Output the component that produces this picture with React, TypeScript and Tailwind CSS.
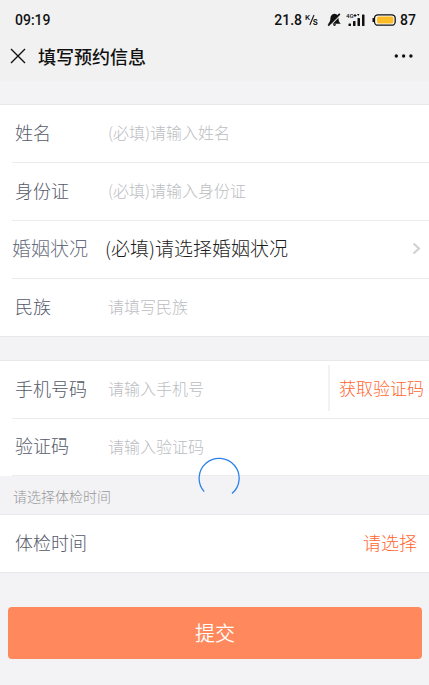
import type { ReactNode } from "react";

const INPUT =
  "min-w-0 flex-1 bg-transparent text-[16px] font-light text-[#333333] outline-none placeholder:text-[#bcbdc2] placeholder:opacity-100";

function StatusBar() {
  return (
    <div className="flex h-10 items-center justify-between pl-[15px] pr-[13px] font-['Roboto','Noto_Sans_CJK_SC',sans-serif] text-[14px] font-medium text-[#111111]">
      <span>09:19</span>
      <div className="flex items-center">
        <span>21.8</span>
        <svg className="ml-[3px]" width="14" height="18" viewBox="0 0 14 18" aria-label="K/s" fill="#111111">
          <text x="0" y="9" fontSize="8">K</text>
          <path d="M9 4L4.8 14" stroke="#111111" strokeWidth="1.1" />
          <text x="7.8" y="14" fontSize="10">s</text>
        </svg>
        <svg className="ml-2" width="15" height="14" viewBox="0 0 15 14" aria-label="静音">
          <path d="M7.5 0.8C4.4 1.3 3.5 3.2 3.4 5.5C3.3 8 2.7 9.2 1 10.8H13.8C12.3 9.2 11.6 8 11.5 5.5C11.4 3.2 10.5 1.3 7.5 0.8Z" fill="#111111" />
          <path d="M5.8 11.2H9.2Q8.8 13 7.5 13Q6.2 13 5.8 11.2Z" fill="#111111" />
          <path d="M13.8 1.6L2.6 13" stroke="#f1f1f1" strokeWidth="1.2" />
          <path d="M12.8 0.8L1.2 12.6" stroke="#111111" strokeWidth="1.7" />
        </svg>
        <svg className="ml-1" width="20" height="16" viewBox="0 0 20 16" aria-label="4G+" fill="#111111">
          <text x="0" y="6" fontSize="6">4G</text>
          <path d="M7.5 3.5H10.5M9 2V5" stroke="#111111" strokeWidth="1" />
          <path d="M11 2H13.5L12.2 4Z" />
          <rect x="2.5" y="11.5" width="2.5" height="2.5" rx="0.6" />
          <rect x="7" y="9" width="2.5" height="5" rx="0.6" />
          <rect x="11.5" y="6" width="2.5" height="8" rx="0.6" />
          <rect x="16" y="2.5" width="2.5" height="11.5" rx="0.6" />
        </svg>
        <svg className="ml-[6px]" width="24" height="12" viewBox="0 0 24 12" aria-label="电量">
          <path d="M1.4 4V8" stroke="#111111" strokeWidth="1.8" />
          <rect x="2.5" y="0.8" width="20.7" height="10.4" rx="3.5" fill="#f8f8f8" stroke="#111111" strokeWidth="1.3" />
          <rect x="5" y="2.4" width="16.4" height="7.2" rx="1.5" fill="#ffbc24" />
        </svg>
        <span className="ml-1">87</span>
      </div>
    </div>
  );
}

function Header() {
  return (
    <header className="bg-[#f1f1f1]">
      <StatusBar />
      <div className="flex h-[41px] items-start pl-[10px] pr-4">
        <button type="button" aria-label="关闭" className="flex h-8 items-center">
          <svg width="16" height="16" viewBox="0 0 16 16" fill="none" stroke="#111111" strokeWidth="1.4">
            <path d="M1 1L15 15M15 1L1 15" />
          </svg>
        </button>
        <h1 className="ml-3 text-[18px] font-medium leading-8 text-[#111111]">填写预约信息</h1>
        <button type="button" aria-label="更多" className="ml-auto flex h-8 items-center">
          <svg width="19" height="4" viewBox="0 0 19 4" fill="#111111">
            <circle cx="2.3" cy="2" r="1.7" />
            <circle cx="9.6" cy="2" r="1.7" />
            <circle cx="16.9" cy="2" r="1.7" />
          </svg>
        </button>
      </div>
    </header>
  );
}

function Row({ id, label, children }: { id: string; label: string; children: ReactNode }) {
  return (
    <div className="flex h-[58px] items-center pb-[3px] pl-[3px] last-of-type:h-[57px]">
      <label htmlFor={id} className="w-[93px] shrink-0 text-[18px] font-light text-[#555a69]">
        {label}
      </label>
      {children}
    </div>
  );
}

export default function App() {
  return (
    <div className="min-h-screen bg-[#f3f3f5] font-['Noto_Sans_CJK_SC',sans-serif]">
      <Header />
      <form onSubmit={(event) => event.preventDefault()}>
        <section className="mt-[23px] divide-y divide-[#ececee] border-y border-[#e8e8ea] bg-white pl-3">
          <Row id="name" label="姓名">
            <input id="name" className={INPUT} placeholder="(必填)请输入姓名" />
          </Row>
          <Row id="idcard" label="身份证">
            <input id="idcard" className={INPUT} placeholder="(必填)请输入身份证" />
          </Row>
          <div className="flex h-[58px] items-center pb-[3px] pr-2">
            <label htmlFor="marriage" className="w-[93px] shrink-0 text-[19px] font-light text-[#686e7e]">
              婚姻状况
            </label>
            <select
              id="marriage"
              className="min-w-0 flex-1 appearance-none bg-transparent text-[19px] font-light text-[#1c1c1c] outline-none"
            >
              <option>(必填)请选择婚姻状况</option>
              <option>未婚</option>
              <option>已婚</option>
            </select>
            <svg width="9" height="13" viewBox="0 0 9 13" fill="none" stroke="#d0d0d2" strokeWidth="2">
              <path d="M1.5 1.5L7 6.5L1.5 11.5" />
            </svg>
          </div>
          <Row id="nation" label="民族">
            <input id="nation" className={INPUT} placeholder="请填写民族" />
          </Row>
        </section>

        <section className="relative mt-[23px] divide-y divide-[#ececee] border-t border-[#e8e8ea] bg-white pl-3">
          <Row id="phone" label="手机号码">
            <input id="phone" type="tel" className={INPUT} placeholder="请输入手机号" />
            <button
              type="button"
              className="h-[46px] shrink-0 border-l-2 border-[#f2f2f3] pl-[9px] pr-[5px] text-[17px] font-light text-[#ff6530]"
            >
              获取验证码
            </button>
          </Row>
          <Row id="code" label="验证码">
            <input id="code" className={INPUT} placeholder="请输入验证码" />
          </Row>
          <svg
            className="absolute left-1/2 top-24 ml-[-17px]"
            width="42"
            height="42"
            viewBox="0 0 42 42"
            fill="none"
            stroke="#2b83ea"
            strokeWidth="1.3"
            role="status"
            aria-label="加载中"
          >
            <path d="M6.2 34.6A20 20 0 1 1 34 36.6" />
          </svg>
        </section>

        <p className="pb-[2px] pl-[13px] pt-1 text-[14px] font-light leading-8 text-[#98989a]">请选择体检时间</p>

        <section className="border-y border-[#e8e8ea] bg-white pl-3">
          <Row id="date" label="体检时间">
            <button id="date" type="button" className="ml-auto pr-3 text-[18px] font-light text-[#ff6530]">
              请选择
            </button>
          </Row>
        </section>

        <div className="pb-6 pl-2 pr-[7px] pt-[34px]">
          <button type="submit" className="h-[52px] w-full rounded bg-[#ff895d] text-[20px] font-[350] text-white">
            提交
          </button>
        </div>
      </form>
    </div>
  );
}
